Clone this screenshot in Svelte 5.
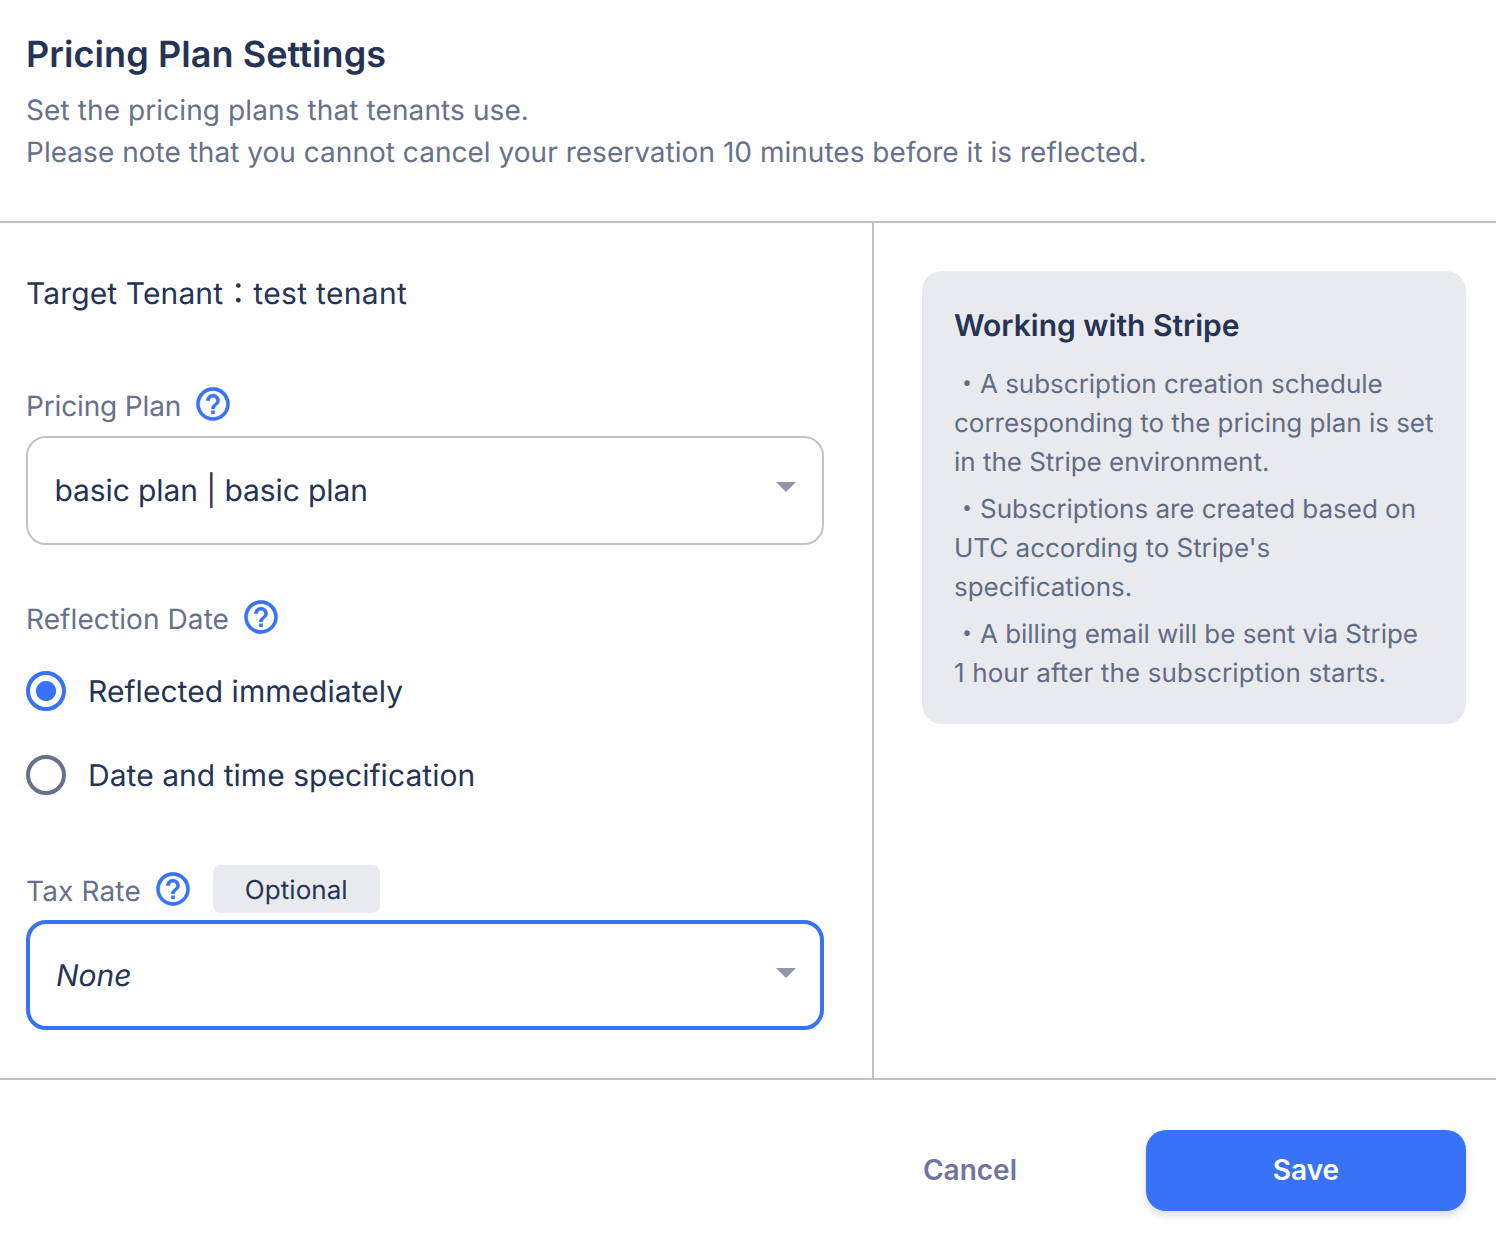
<script>
  const notes = [
    ['・A subscription creation schedule', 'corresponding to the pricing plan is set', 'in the Stripe environment.'],
    ['・Subscriptions are created based on', "UTC according to Stripe's", 'specifications.'],
    ['・A billing email will be sent via Stripe', '1 hour after the subscription starts.']
  ];
  let reflection = $state('now');
  const options = [
    { value: 'now', label: 'Reflected immediately' },
    { value: 'scheduled', label: 'Date and time specification' }
  ];
</script>

{#snippet help()}
  <svg class="help" viewBox="0 0 24 24" aria-hidden="true">
    <path d="M11 18h2v-2h-2v2zm1-16C6.48 2 2 6.48 2 12s4.48 10 10 10 10-4.48 10-10S17.52 2 12 2zm0 18c-4.41 0-8-3.59-8-8s3.59-8 8-8 8 3.59 8 8-3.59 8-8 8zm0-14c-2.21 0-4 1.79-4 4h2c0-1.1.9-2 2-2s2 .9 2 2c0 2-3 1.75-3 5h2c0-2.25 3-2.5 3-5 0-2.21-1.79-4-4-4z" />
  </svg>
{/snippet}

{#snippet caret()}
  <svg class="caret" viewBox="0 0 24 24" aria-hidden="true"><path d="M7 10l5 5 5-5z" /></svg>
{/snippet}

<div class="dialog">
  <header>
    <h1>Pricing Plan Settings</h1>
    <p class="intro">Set the pricing plans that tenants use.</p>
    <p>Please note that you cannot cancel your reservation 10 minutes before it is reflected.</p>
  </header>

  <div class="body">
    <main>
      <p class="tenant">Target Tenant：<span>test tenant</span></p>

      <section class="plan">
        <div class="label-row"><span class="label">Pricing Plan</span>{@render help()}</div>
        <div class="select" role="button" tabindex="0"><span>basic plan | basic plan</span>{@render caret()}</div>
      </section>

      <section class="date">
        <div class="label-row"><span class="label">Reflection Date</span>{@render help()}</div>
        <div class="radios">
          {#each options as option}
            <label class="radio">
              <input type="radio" name="reflection" value={option.value} bind:group={reflection} />
              <span>{option.label}</span>
            </label>
          {/each}
        </div>
      </section>

      <section class="tax">
        <div class="label-row"><span class="label">Tax Rate</span>{@render help()}<span class="badge">Optional</span></div>
        <div class="select focused" role="button" tabindex="0"><em>None</em>{@render caret()}</div>
      </section>
    </main>

    <aside>
      <div class="card">
        <h2>Working with Stripe</h2>
        {#each notes as lines}
          <p>{#each lines as line}<span>{line}</span>{/each}</p>
        {/each}
      </div>
    </aside>
  </div>

  <footer>
    <button class="cancel">Cancel</button>
    <button class="save">Save</button>
  </footer>
</div>

<style>
  :global(body) { background: #fff; }
  .dialog {
    box-sizing: border-box;
    width: 1496px;
    height: 1246px;
    overflow: hidden;
    display: flex;
    flex-direction: column;
    background: #fff;
    color: #263354;
    font-family: Inter, "Noto Sans CJK JP", sans-serif;
    font-size: 30px;
    line-height: 45px;
    text-rendering: geometricPrecision;
  }
  h1, h2, p { margin: 0; }
  header { padding: 27px 26px 48px; border-bottom: 2px solid #bdc0cd; }
  h1 { font-size: 36px; line-height: 54px; font-weight: 600; margin-bottom: 8px; letter-spacing: 0.08px; }
  header p { font-size: 28px; line-height: 42px; color: #68718a; letter-spacing: 0.025px; }
  header .intro { letter-spacing: 0.1px; }

  .body { display: grid; grid-template-columns: 872px 1fr; height: 855px; }
  main { padding: 48px 48px 0 26px; }
  .tenant { height: 45px; line-height: 47px; letter-spacing: 0.12px; }
  .tenant span { letter-spacing: 0.34px; }
  .plan { margin-top: 68px; }
  .date { margin-top: 52px; }
  .tax { margin-top: 48px; }

  .label-row { display: flex; align-items: center; height: 40px; margin-bottom: 12px; }
  .tax .label-row { height: 48px; margin-bottom: 7px; }
  .date .label-row { margin-bottom: 0; }
  .label { font-size: 28px; line-height: 36px; padding-top: 4px; margin-right: 12px; color: #68718a; }
  .plan .label { letter-spacing: -0.15px; }
  .date .label { letter-spacing: 0.09px; }
  .tax .label { letter-spacing: 0.14px; }
  .help { display: block; width: 40px; height: 40px; fill: #3873f7; stroke: #3873f7; stroke-width: 0.2; }
  .badge {
    margin-left: 20px;
    padding: 3px 32px 0;
    border-radius: 8px;
    background: #e9eaee;
    font-size: 26px;
    line-height: 45px;
    letter-spacing: 0.05px;
  }

  .select {
    box-sizing: border-box;
    width: 798px;
    height: 109px;
    padding: 0 12px 0 26.5px;
    display: flex;
    align-items: center;
    justify-content: space-between;
    border: 2px solid #c4c4c4;
    border-radius: 20px;
    outline: none;
  }
  .select span { padding-top: 2px; letter-spacing: -0.1px; }
  .select em { padding-top: 2px; }
  .select.focused { height: 110px; border: 4px solid #3873f7; padding: 0 10px 0 26px; }
  .caret { width: 48px; height: 48px; margin-bottom: 9px; fill: #9297a8; }
  .focused .caret { margin-bottom: 6px; }

  .radios { padding-top: 12px; }
  .radio { display: flex; align-items: center; gap: 22px; height: 84px; letter-spacing: 0.04px; }
  .radio span { padding-top: 2px; }
  .radio input {
    appearance: none;
    box-sizing: border-box;
    width: 40px;
    height: 40px;
    margin: 0;
    border: 4px solid #68718a;
    border-radius: 50%;
  }
  .radio input:checked {
    border-color: #3873f7;
    background: radial-gradient(circle, #3873f7 9.6px, transparent 10.4px);
  }

  aside { padding: 48px 30px 0 48px; border-left: 2px solid #bdc0cd; }
  .card { padding: 32px; border-radius: 20px; background: #e9eaee; height: 389px; }
  h2 { font-size: 30px; line-height: 47px; font-weight: 600; margin-bottom: 15px; }
  .card p { font-size: 26px; line-height: 39px; color: #616c86; letter-spacing: -0.025px; }
  .card p + p { margin-top: 8px; }
  .card p span { display: block; white-space: nowrap; }
  .card p:last-child span:last-child { letter-spacing: 0.13px; }

  footer {
    flex: 1;
    display: flex;
    justify-content: flex-end;
    align-items: flex-start;
    gap: 16px;
    padding: 50px 30px 0;
    border-top: 2px solid #bdc0cd;
  }
  button {
    box-sizing: border-box;
    width: 320px;
    height: 81px;
    padding: 0 0 1px;
    border: 0;
    border-radius: 20px;
    font: 600 28px/42px Inter, sans-serif;
  }
  .cancel { background: none; color: #7075a0; }
  .save { background: #3873f7; color: #fff; box-shadow: 0 4px 8px rgba(0, 0, 0, 0.15); }
</style>
